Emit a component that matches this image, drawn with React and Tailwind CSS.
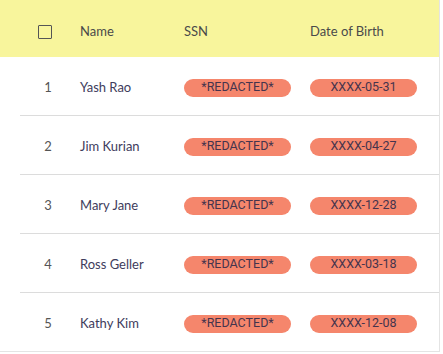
const rows = [
  { id: 1, name: "Yash Rao", dob: "XXXX-05-31" },
  { id: 2, name: "Jim Kurian", dob: "XXXX-04-27" },
  { id: 3, name: "Mary Jane", dob: "XXXX-12-28" },
  { id: 4, name: "Ross Geller", dob: "XXXX-03-18" },
  { id: 5, name: "Kathy Kim", dob: "XXXX-12-08" },
];

function Pill({ children }) {
  return (
    <span className="flex items-center justify-center w-[107px] h-[18px] rounded-full bg-[#f5866c] text-[12.5px] leading-none text-[#45344d] font-['Roboto',sans-serif] font-normal">
      {children}
    </span>
  );
}

export default function App() {
  return (
    <div className="w-[443px] h-[354px] bg-white font-['Lato',sans-serif]">
      <div className="w-[440px] border-r border-b border-[#e4e4e4]">
        {/* header */}
        <div className="flex items-center h-[57px] pt-[7px] bg-[#f8f59c] text-[13px] text-[#4a4a4a]">
          <div className="w-[80px] flex justify-center pl-[10px]">
            <span className="w-[14px] h-[14px] border-[1.5px] border-[#555] rounded-[1px]" />
          </div>
          <div className="w-[104px]">Name</div>
          <div className="w-[126px]">SSN</div>
          <div>Date of Birth</div>
        </div>

        {/* body */}
        {rows.map((r, i) => (
          <div key={r.id} className={i < rows.length - 1 ? "ml-5 border-b border-[#dcdcdc]" : "ml-5"}>
            <div className="flex items-center h-[58px] -ml-5 pt-[3px]">
              <div className="w-[80px] flex justify-center pl-[16px] text-[13px] text-[#555]">{r.id}</div>
              <div className="w-[104px] text-[13px] text-[#3e3c5c]">{r.name}</div>
              <div className="w-[126px]">
                <Pill>*REDACTED*</Pill>
              </div>
              <div>
                <Pill>{r.dob}</Pill>
              </div>
            </div>
          </div>
        ))}
      </div>
    </div>
  );
}
